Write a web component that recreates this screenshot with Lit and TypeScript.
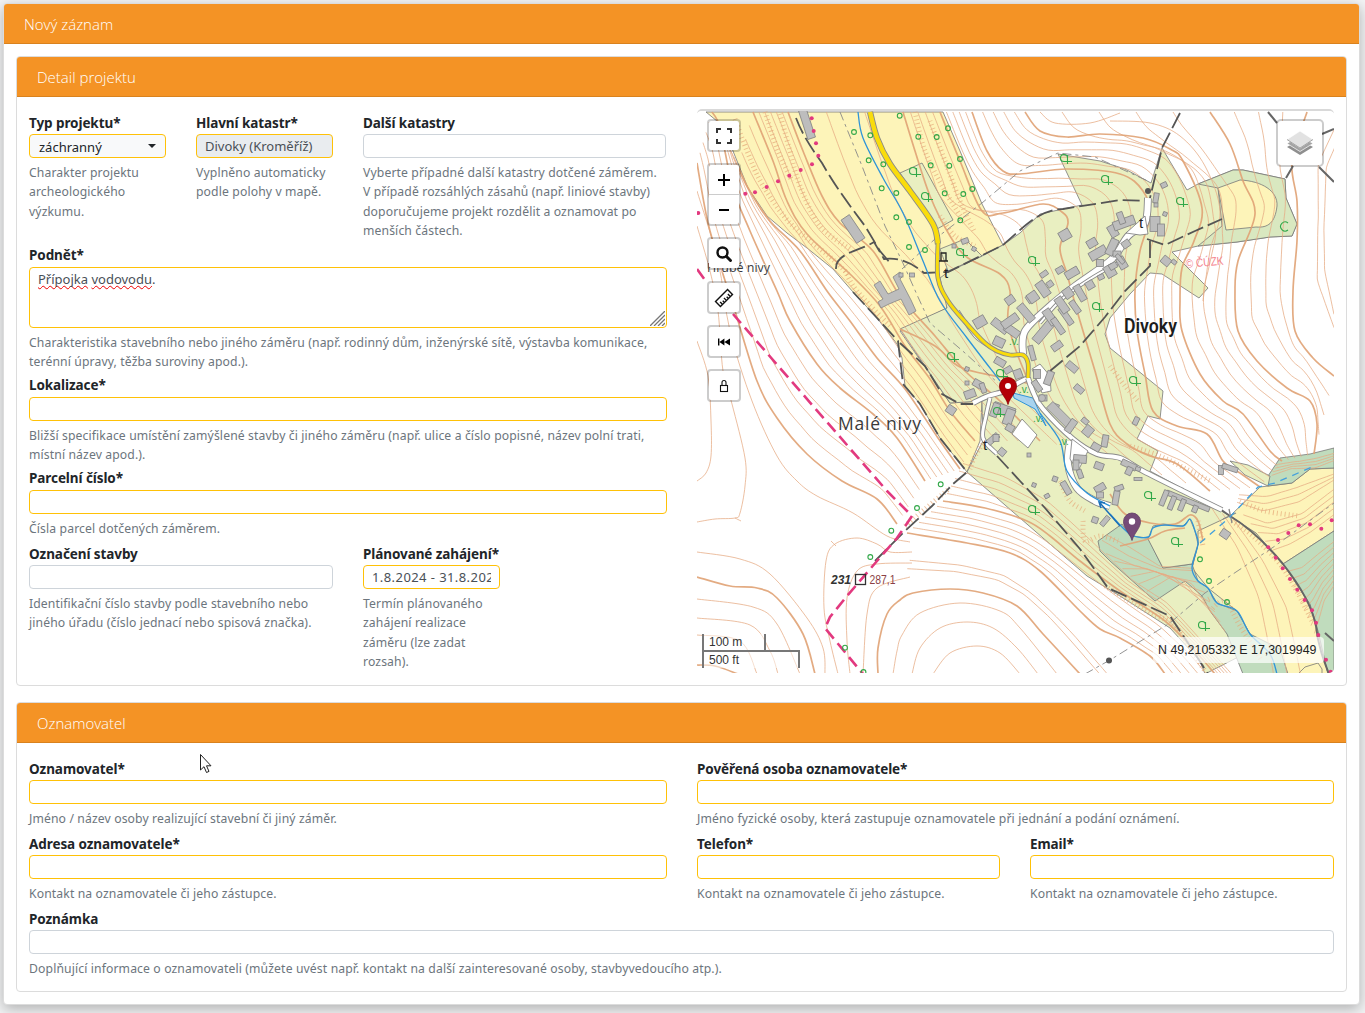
import { LitElement, html, svg, css, nothing } from "lit";
import { customElement, property } from "lit/decorators.js";

type Pt = [number, number];

const parse = (s: string): Pt[] =>
  s.trim().split(/\s+/).map((p) => p.split(",").map(Number) as Pt);

/** Resamples a polyline to n points spaced evenly along its length. */
function resample(pts: Pt[], n: number): Pt[] {
  const acc = [0];
  for (let i = 1; i < pts.length; i++) {
    acc.push(acc[i - 1] + Math.hypot(pts[i][0] - pts[i - 1][0], pts[i][1] - pts[i - 1][1]));
  }
  const total = acc[acc.length - 1];
  const out: Pt[] = [];
  let k = 1;
  for (let i = 0; i < n; i++) {
    const d = (total * i) / (n - 1);
    while (k < pts.length - 1 && acc[k] < d) k++;
    const t = (d - acc[k - 1]) / (acc[k] - acc[k - 1] || 1);
    out.push([
      pts[k - 1][0] + (pts[k][0] - pts[k - 1][0]) * t,
      pts[k - 1][1] + (pts[k][1] - pts[k - 1][1]) * t,
    ]);
  }
  return out;
}

/** Catmull-Rom spline through the points, as a path string. */
function smooth(p: Pt[]): string {
  let d = `M${p[0][0].toFixed(1)},${p[0][1].toFixed(1)}`;
  for (let i = 0; i < p.length - 1; i++) {
    const a = p[Math.max(0, i - 1)], b = p[i], c = p[i + 1], e = p[Math.min(p.length - 1, i + 2)];
    const v = [
      b[0] + (c[0] - a[0]) / 6, b[1] + (c[1] - a[1]) / 6,
      c[0] - (e[0] - b[0]) / 6, c[1] - (e[1] - b[1]) / 6, c[0], c[1],
    ].map((x) => x.toFixed(1));
    d += `C${v[0]},${v[1]} ${v[2]},${v[3]} ${v[4]},${v[5]}`;
  }
  return d;
}

const curve = (s: string) => smooth(parse(s));

/** Contours interpolated between two key contours. */
function between(a: string, b: string, n: number): string[] {
  const A = resample(parse(a), 26), B = resample(parse(b), 26);
  const out: string[] = [];
  for (let i = 1; i <= n; i++) {
    const t = i / (n + 1);
    out.push(smooth(A.map((p, j) => [p[0] + (B[j][0] - p[0]) * t, p[1] + (B[j][1] - p[1]) * t] as Pt)));
  }
  return out;
}

const W1 = "697,162 708,222 722,270 735,310 757,380 777,417 807,453 842,480 877,498 897,523";
const W2 = "712,111 720,127 733,187 750,230 777,290 790,320 817,363 840,387 873,413 897,437 925,480";
const W3 = "738,165 748,187 770,220 800,250 827,290 850,320 877,357 905,388 938,437 960,468";
const Y1 = "753,111 773,160 787,200 807,233 850,273 880,305 905,345 930,378 950,410 975,440";
const Y2 = "788,111 803,150 822,195 840,222 873,250 900,295 935,335 965,370 1000,400 1040,440";
const H_2 = "903,111 915,150 930,195 950,235 968,257 1000,273 1010,290 1008,320 1020,360 1045,410 1090,450";
const H_1 = "940,111 960,160 982,210 1003,212 1043,203 1062,211 1068,222 1060,247 1067,273 1080,320 1095,370 1110,423 1127,443 1150,455 1177,463 1210,490";
const H0 = "972,111 987,150 1003,170 1020,173 1067,168 1120,173 1143,190 1150,215 1140,250 1135,290 1137,330 1145,373 1153,410 1177,425 1207,433 1223,460 1240,472 1260,486";
const H1 = "1025,111 1040,130 1067,136 1100,133 1143,137 1170,148 1183,160 1202,207 1194,240 1182,267 1180,300 1182,330 1200,373 1223,400 1243,413 1270,450 1282,460";
const H2 = "1210,111 1230,143 1243,180 1255,213 1238,260 1235,290 1238,330 1257,360 1287,387 1310,400 1317,423 1314,453";
const H3 = "1307,111 1292,160 1297,200 1297,240 1293,290 1295,330 1313,357 1334,375";
const S1 = "943,500 985,507 1027,520 1050,535 1080,560 1120,590 1165,620 1195,650 1215,673";
const S2 = "907,532 967,542 1010,552 1040,570 1080,610 1100,628 1120,637 1150,655 1165,673";
const S3 = "878,673 878,647 887,613 900,599 913,592 950,588 983,592 1017,605 1043,633 1080,673";
const G1 = "967,455 1010,470 1050,495 1098,540 1135,577 1170,600 1205,640 1235,673";

const BOLD = [
  W1, W2, W3, Y1, Y2, H_2, H_1, H0, H1, H2, H3, S1, S2, S3,
  "697,576 730,585 757,587 777,597 803,633 815,673",
  "697,664 715,665 738,673",
  "900,328 935,345 960,366 1000,376 1040,385",
  "1110,493 1125,513 1150,522 1175,523 1190,514 1198,520 1203,540",
  "1120,545 1148,538 1165,530 1185,527",
].map(curve);

const THIN = [
  ...between(W1, W2, 4), ...between(W2, W3, 5), ...between(W3, Y1, 3), ...between(Y1, Y2, 5),
  ...between(Y2, H_2, 2), ...between(H_2, H_1, 4), ...between(H_1, H0, 4), ...between(H0, H1, 4),
  ...between(H1, H2, 4), ...between(H2, H3, 3), ...between(S1, G1, 5), ...between(S1, S2, 5),
  ...between(
    "912,551 967,558 1010,570 1040,592 1080,632 1115,673",
    "905,576 950,577 990,583 1017,595 1043,617 1092,673", 2),
  ...between("1200,500 1225,540 1245,590 1255,640 1260,673", "1245,525 1275,565 1300,610 1314,673", 3),
  ...between("1236,505 1262,517 1300,508 1334,482", "1280,558 1300,545 1334,520", 5),
  ...between("1240,490 1270,488 1300,478 1334,470", "1236,505 1262,517 1300,508 1334,482", 3),
  ...between("1283,563 1300,560 1334,535", "1318,640 1325,605 1334,590", 9),
  ...between("1270,478 1290,470 1315,470 1334,462", "1278,460 1300,458 1334,450", 4),
  ...between("1098,545 1125,562 1160,570 1195,572", "1155,598 1180,578 1200,585 1230,640", 6),
  ...between("1098,545 1125,562 1160,570 1195,572", "1110,528 1135,540 1160,563 1192,565", 2),
  ...between("1334,111 1310,160 1312,220 1310,290 1334,340", "1350,130 1334,170 1330,220 1334,300", 2),
  ...[
    "697,340 708,375 711,420 711,455 706,472 697,480",
    "697,225 710,270 718,310 723,370 732,403 745,457 745,485 740,512 735,517 715,518 697,521",
    "697,190 718,260 730,330 752,400 777,455 797,480 817,495 853,512 887,535 910,541",
    "697,551 740,558 770,573 807,617 823,647 825,673",
    "697,598 753,606 777,623 800,673",
    "697,617 750,624 770,650 778,673",
    "697,634 740,640 757,673",
    "838,673 830,640 824,607 826,560 835,543 857,537 877,543 890,551 912,551",
    "850,673 847,640 847,597 857,570 877,563 912,562",
    "863,673 867,613 877,587 910,576",
    "893,673 897,650 902,634 920,612 960,602 1000,610 1020,627 1057,673",
    "912,673 920,647 940,627 967,621 993,627 1017,647 1038,673",
    "933,673 950,652 977,645 1000,652 1020,673",
    "1040,111 1055,122 1090,122 1120,112",
    "1110,120 1150,122 1180,135 1205,165 1220,210 1210,250 1203,300",
    "735,517 741,520", "831,540 836,545",
  ].map(curve),
];

const HACHURES = [
  "735,118 747,150 762,183 790,222 830,256 850,275",
  "765,111 778,150 792,180", "780,113 790,150 800,185 820,225 850,248",
  "915,111 925,150 945,190 965,222", "930,120 945,160 960,200 975,232",
  "940,215 955,235 975,245", "985,440 975,455 970,468", "845,270 857,290 890,325",
  "1060,480 1070,500 1085,510", "1232,520 1255,537 1285,570 1312,620",
  "1110,365 1125,385 1138,400", "1130,445 1160,455 1190,470 1210,480",
  "1083,520 1085,540 1100,535 1118,540", "1240,500 1265,510 1300,515",
  "1198,520 1203,545", "1210,610 1225,600 1240,625 1262,660", "1205,600 1215,595",
  "1105,585 1150,612 1175,625 1205,670", "905,525 925,508 950,487",
].map(curve);

const YELLOW = [
  "706,111 943,111 960,150 982,203 1003,244 947,272 947,307 900,330 950,402 982,400 980,440 967,471 940,437 920,403 905,385 902,357 897,343 877,317 853,291 833,268 807,247 787,232 767,215 748,187 735,155 723,125",
  "1198,543 1195,520 1205,500 1230,515 1256,532 1283,563 1310,603 1318,630 1328,673 1277,673 1270,653 1250,633 1237,610 1217,602 1208,587 1198,580 1192,567",
  "1230,515 1260,486 1292,482 1310,468 1334,467 1334,530 1283,563 1256,532",
];
const GREEN = [
  "900,328 947,307 940,277 948,271 982,255 1003,244 1020,232 1040,213 1063,208 1082,204 1058,153 1100,160 1125,168 1151,182 1162,147 1187,189 1198,183 1233,169 1243,169 1285,178 1286,197 1297,223 1292,235 1270,236 1237,241 1198,245 1172,251 1208,287 1199,297 1162,273 1150,272 1130,293 1110,317 1105,333 1110,347 1163,390 1160,418 1148,415 1137,438 1158,450 1150,470 1187,490 1230,515 1198,530 1198,543 1192,567 1208,587 1237,610 1250,650 1205,673 1200,660 1170,627 1120,595 1087,575 1043,537 967,471 983,440 982,400 950,402",
];
const FOREST = [
  "1098,540 1122,523 1130,535 1148,537 1163,567 1192,563 1198,580 1208,587 1217,602 1237,610 1250,633 1280,648 1288,673 1243,673 1227,633 1210,610 1202,595 1185,580 1155,600 1110,560 1100,550",
  "1283,563 1334,530 1334,673 1328,673 1318,630 1310,603",
  "1268,475 1280,457 1310,453 1334,447 1334,467 1310,468 1292,482 1268,485",
];
const BUILDINGS: number[][] = [
  [807,123,8,30,-18],[853,228,10,28,-34],
  [1065,234,11,10,-30],[1072,272,8,14,60],[1060,269,8,6,-30],[1044,273,8,5,-35],[1050,283,6,6,-35],[1043,288,9,16,-35],[1031,297,9,8,-35],[1010,299,9,8,-35],
  [1092,242,10,8,-30],[1098,252,18,9,-30],[1112,246,8,17,25],[1113,230,8,12,-30],[1124,222,22,9,-20],[1121,217,6,12,-20],[1155,223,10,15,0],[1161,229,7,12,0],[1156,197,5,10,10],[1164,184,6,5,-25],[1156,204,4,4,0],[1165,213,4,4,20],
  [1080,292,7,17,-30],[1090,284,8,8,-30],[1101,276,6,5,-25],[1110,270,10,12,-30],[1122,262,8,12,-30],[1100,262,7,7,0],
  [1126,243,8,7,-35],[1117,253,8,6,0],[1113,265,8,6,-30],[1120,258,11,4,50],[1166,260,9,8,40],[1174,261,5,4,40],
  [980,321,12,10,-30],[1000,325,18,8,38],[1012,330,16,8,35],[999,341,11,9,25],[1010,320,18,8,-35],[1026,312,8,20,-40],[1033,296,10,10,-35],[1045,329,9,30,40],[1050,316,8,17,-35],[1058,325,6,18,-35],[1066,315,6,20,-35],[1062,304,8,17,-35],[1075,306,6,14,-35],[1068,292,9,10,-35],
  [1057,345,11,7,-35],[1072,366,12,7,40],[1079,388,10,6,40],[1088,430,9,10,40],[1085,420,7,5,40],[1105,440,6,12,10],[1096,446,9,7,30],[1056,405,6,4,20],[1000,361,11,7,30],[1008,369,8,6,-30],[1018,373,8,9,-20],[1032,352,5,15,-15],[1037,373,7,9,0],[1037,385,6,12,-35],[1049,377,7,14,20],[1043,397,8,6,0],
  [978,383,10,7,30],[983,387,5,10,-20],[970,393,11,8,-20],[951,409,9,8,35],[967,382,4,4,0],[967,368,4,4,20],[1004,409,22,10,20],[1009,416,9,16,20],[995,409,7,14,20],[1010,427,8,7,30],[993,438,6,13,50],[996,437,6,7,0],[1002,451,7,7,40],[1029,454,4,4,0],
  [1061,415,9,32,-45],[1071,425,7,14,35],[1080,458,13,8,5],[1076,464,6,10,0],[1099,465,9,7,20],[1080,473,5,9,-20],[1055,478,5,5,20],[1066,487,6,14,-30],[1100,487,11,7,-30],[1100,494,7,6,0],[1034,484,4,4,20],[1047,495,5,4,-30],[1095,519,6,6,20],[1105,520,11,5,-50],
  [1136,420,5,8,25],[1129,464,16,6,25],[1129,470,6,8,25],[1138,468,5,4,20],[1138,478,8,3,0],[1119,487,9,5,-20],[1116,497,6,14,10],
  [1188,500,46,5,22],[1164,497,5,16,22],[1172,502,5,14,22],[1182,504,5,12,22],[1195,508,5,7,22],[1225,533,9,8,35],
  [1221,469,5,9,0],[1230,467,16,5,18],[954,245,4,4,0],[965,240,7,5,-20],[974,248,4,4,30],[912,274,5,4,0],[901,274,4,4,0],
];
const COMPLEX = "874,284 880,280 888,293 899,288 893,276 900,271 903,275 900,278 911,299 916,310 909,314 901,298 889,303 881,307 878,301 883,298";
const DOTS = "811.7,117.3 813.7,130 816,142.3 818.3,154.7 812,163.3 800.7,169 789.3,174.7 778,180.3 766.7,186 755,191.3 745.3,192.7 698.3,212 1331.7,519.3 1321.3,527.7 1310,523.3 1298.7,524.3 1288.3,532 1278,539 1268.3,546.3 1275.7,556.7 1282.7,567.3 1290,578 1297.3,588.7 1304.7,599 1312,609.3 1316,621.7 1318.3,634 1326,658.7 1330.7,670.7";
const RINGS = "854,131 870.3,134.3 868.7,159.3 883.3,163.3 881.7,187.3 896.3,192 896.3,216.3 909,221 899.7,114.7 918.3,135.7 936.7,136 948,127.3 930.7,164.3 949.3,164.7 960,158 944.7,192.3 963.3,193 972.3,188 960.3,219.3 925,249 909,246 940.7,483.3 917,507 891.3,529.7 870.3,556 845,646.7 863.5,671 1200,558.3 1209,580 1227,601";
const TREES: number[][] = [[913,170],[925,195],[960,251],[1032,259],[1105,178],[1064,157],[1180,200],[951,355],[1000,372],[1096,305],[1133,379],[1032,508],[1148,494],[1175,540],[1202,624],[997,410]];
const LOW: number[][] = [[1014,341],[1024,389],[1038,418],[1064,441]];

@customElement("topo-map")
export class TopoMap extends LitElement {
  static styles = css`
    :host { display: block; }
    .map { display: block; width: 637px; height: 564px; border-radius: 0 0 4px 4px; }
    .thin { fill: none; stroke: #e6ab83; stroke-width: 0.9; opacity: 0.85; }
    .bold { fill: none; stroke: #e0a274; stroke-width: 1.7; opacity: 0.9; }
    .hach { fill: none; stroke: #e5a878; stroke-width: 5; stroke-dasharray: 0.9 3; opacity: 0.75; }
    .area { stroke: #777; stroke-width: 0.8; }
    .yellow { fill: #fdf4b9; }
    .green { fill: #e9efc1; }
    .sage { fill: #d9e8c0; }
    .forest { fill: #c0dcbd; }
    .white { fill: #fff; }
    .casing { fill: none; stroke: #8a8a8a; stroke-linejoin: round; }
    .road { fill: none; stroke: #fff; stroke-linejoin: round; }
    .main { stroke: #f9dc0c; }
    .water { fill: none; stroke: #2f94d8; stroke-width: 1.3; }
    .arrow { stroke: #1c6fb8; fill: none; stroke-width: 1.5; }
    .pond { fill: #a9d3ee; stroke: #2f94d8; stroke-width: 1; }
    .dash { fill: none; stroke: #555; stroke-width: 1.8; stroke-dasharray: 17 5; }
    .rail { fill: none; stroke: #666; stroke-width: 2; }
    .path { fill: none; stroke: #888; stroke-width: 0.9; stroke-dasharray: 9 4 3 4; }
    .border { fill: none; stroke: #e2397f; stroke-width: 2.6; stroke-dasharray: 12 6; }
    .dot { fill: #e2397f; }
    .house { fill: #bdbdbd; stroke: #858585; stroke-width: 0.8; }
    .ring { fill: none; stroke: #31a848; stroke-width: 1.1; }
    .low { font: 10px "Liberation Sans", sans-serif; fill: #31a848; }
    .drain { fill: none; stroke: #43a0dd; stroke-width: 1.3; stroke-dasharray: 7 6; }
    .name { font-family: "Open Sans", sans-serif; fill: #3a3a3a; paint-order: stroke; stroke: #fff; stroke-width: 1px; }
    .town { font: 600 20px Roboto, sans-serif; fill: #1c1c1c; stroke: #fff; stroke-width: 1.5px; paint-order: stroke; }
    .num { font: italic bold 12px "Liberation Sans", sans-serif; fill: #333; }
    .elev { font: 12px "Liberation Sans", sans-serif; fill: #8b3f45; }
    .copy { font: 12px "Liberation Sans", sans-serif; fill: #f4848f; }
    .sym { font: 15px "Liberation Sans", sans-serif; fill: #222; }
  `;

  render() {
    const area = (list: string[], cls: string) =>
      list.map((p) => svg`<polygon class="area ${cls}" points=${p}></polygon>`);
    const road = (pts: string, w: number, cls = "") => svg`
      <path class="casing" stroke-width=${w + 1.8} d=${curve(pts)}></path>
      <path class="road ${cls}" stroke-width=${w} d=${curve(pts)}></path>`;
    return html`<svg class="map" viewBox="697 110 637 564">
      <rect class="white" x="697" y="110" width="637" height="564"></rect>
      ${area(YELLOW, "yellow")} ${area(GREEN, "green")} ${area(FOREST, "forest")}
      <polygon class="area green" points="900,172 922,162 953,219 937,228"></polygon>
      <polygon class="area green" points="940,248 965,238 982,255 948,270"></polygon>
      <polygon class="area green" points="1148,538 1153,525 1163,523 1183,525 1190,518 1195,530 1198,543 1192,563 1163,567"></polygon>
      <polygon class="area sage" points="1198,183 1233,169 1243,169 1285,178 1286,197 1297,223 1292,235 1270,236 1237,241 1198,245 1222,225 1218,187"></polygon>
      <path class="area yellow" d="M1218,187 L1240,179 C1262,180 1278,190 1277,205 C1275,222 1268,227 1256,226 L1226,229 Z"></path>
      <polygon class="area yellow" points="1298,673 1305,666 1318,662 1322,668 1322,673"></polygon>
      <polygon class="area green" points="1230,460 1248,464 1270,475 1268,485 1245,474"></polygon>
      ${THIN.map((d) => svg`<path class="thin" d=${d}></path>`)}
      ${BOLD.map((d) => svg`<path class="bold" d=${d}></path>`)}
      ${HACHURES.map((d) => svg`<path class="hach" d=${d}></path>`)}

      <path class="path" d="M840,111 L862,165 L885,225 L902,260 L918,296 L930,322 L965,352 L998,382"></path>
      <path class="path" d="M902,268 L935,238 L982,202 L1020,170 L1058,152 L1095,156 L1148,180"></path>
      <path class="path" d="M1085,673 L1110,659 L1170,622 L1205,592 L1230,575 L1275,545 L1334,502"></path>
      <path class="dash" d="M796,117 C803,135 812,148 822,162 C835,185 850,205 865,225 L880,250 L890,262"></path>
      <path class="dash" d="M836,268 C835,252 860,250 874,241 L884,258 C900,256 912,262 924,272 L948,271 L1003,244 C1025,225 1040,208 1063,208 L1120,199 L1148,200"></path>
      <path class="dash" d="M1180,112 L1162,147 L1150,197 L1147,215"></path>
      <path class="dash" d="M1147,238 L1165,244 L1195,230 L1222,218"></path>
      <path class="dash" d="M1150,240 L1150,265 L1125,290 L1105,316 L1080,345 L1050,370"></path>
      <path class="dash" d="M853,291 L877,317 L898,340 L903,383 L920,403 L940,437 L967,471 L953,483 L932,505 L905,530 L875,560"></path>
      <path class="dash" d="M900,342 L925,365 L942,393 L960,403 L973,403"></path>
      <path class="dash" d="M997,455 L1020,480 L1045,507 L1080,548 L1108,587 L1170,615 L1190,645 L1208,673"></path>
      <path class="rail" d="M1268,111 L1277,122 M1286,177 L1293,165 M1322,133 L1334,128 M1319,166 L1334,181"></path>
      <path class="rail" d="M1220,508 L1230,515 C1250,527 1268,545 1283,563 C1298,582 1312,605 1316,625 C1318,645 1324,660 1329,673 M1325,632 L1334,640"></path>
      <path class="casing" stroke-width="1.3" d="M1223,518 L1236,512 M1229,508 L1232,522"></path>

      <path class="water" d=${curve("858,111 863,137 883,177 903,212 923,260 940,300 967,337 1000,380")}></path>
      <path class="pond" d="M1013,392 L1033,397 L1046,425 L1035,408 L1014,397 Z"></path>
      ${road("973,402 988,395 1005,390 1018,382 1028,377", 4)}
      ${road("990,397 986,415 983,437 997,453", 3)}
      ${road("1028,377 1034,393 1043,408 1073,438 1097,453 1120,457 1143,470 1183,490 1222,509", 4)}
      ${road("1070,440 1068,463 1077,487 1095,500 1110,505", 6)}
      ${road("1023,353 1025,330 1050,305 1075,285 1112,258 1128,235 1145,222 1148,197", 6)}
      ${road("1040,322 1062,298 1090,278 1118,262", 2)}
      ${road("958,310 975,335 992,347", 2)}
      <polygon class="area white" points="1022,418 1037,434 1028,447 1012,433"></polygon>
      <polygon class="area white" points="1032,368 1040,363 1050,375 1051,390 1042,392"></polygon>
      <polygon class="area white" points="1072,438 1088,450 1078,470 1070,458"></polygon>
      <polygon class="area white" points="1126,232 1145,215 1148,233 1140,234"></polygon>
      ${road("870,111 877,137 890,163 910,190 933,223 938,243", 4.5, "main")}
      ${road("938,242 938,277 948,300 967,323 985,342 997,350 1010,354 1023,354 1028,362 1028,377", 3, "main")}
      <path class="water" d=${curve("1040,412 1060,440 1067,470 1087,492 1110,505")}></path>
      <path class="water" d=${curve("1110,513 1130,533 1148,536 1153,527 1165,524 1183,525 1190,518 1195,530 1198,543 1192,567 1198,580 1208,587 1217,602 1237,610 1250,633 1270,653 1277,673")}></path>
      <path class="arrow" d="M1120,525 L1100,502 M1105,502 L1099,501 L1101,507"></path>
      <path class="drain" d="M1200,542 L1230,516 L1258,486 L1275,482 L1312,466"></path>

      <polygon class="house" points=${COMPLEX}></polygon>
      ${BUILDINGS.map(([x, y, w, h, a]) => svg`<rect class="house" x=${x - w / 2} y=${y - h / 2} width=${w} height=${h} transform="rotate(${a} ${x} ${y})"></rect>`)}
      <circle cx="1148" cy="190" r="3" fill="#555"></circle>
      <circle cx="1109" cy="659.5" r="3" fill="#555"></circle>
      <circle class="house" cx="1042" cy="397" r="3.5"></circle>

      <path class="border" d="M697,268 L705,279 M733,313 L887,490 L912,515 L897,537 L877,560 L847,595 L830,616 L825,627 L863,673"></path>
      ${parse(DOTS).map(([x, y]) => svg`<circle class="dot" cx=${x} cy=${y} r="2"></circle>`)}
      ${parse(RINGS).map(([x, y]) => svg`<circle class="ring" cx=${x} cy=${y} r="2.4"></circle>`)}
      ${TREES.map(([x, y]) => svg`<path class="ring" d="M${x + 3.5},${y} a3.5,3.5 0 1 0 -3.5,3.5 h8 M${x + 3.5},${y - 3} v9"></path>`)}
      ${LOW.map(([x, y]) => svg`<text class="low" text-anchor="middle" x=${x} y=${y + 3}>.v.</text>`)}
      <path class="ring" d="M1288,222 a4.500,4.500 0 1 0 0,7"></path>

      <text class="name" font-size="12.500" x="707" y="271" textLength="63">Hrubé nivy</text>
      <text class="name" font-size="17.500" x="838" y="428.500" textLength="83">Malé nivy</text>
      <text class="town" x="1124" y="332" textLength="53" lengthAdjust="spacingAndGlyphs">Divoky</text>
      <text class="num" x="831" y="583">231</text>
      <rect x="855.500" y="573.500" width="10" height="10" fill="none" stroke="#333" stroke-width="1.3"></rect>
      <text class="elev" x="869.500" y="583" textLength="26" lengthAdjust="spacingAndGlyphs">287,1</text>
      <text class="copy" x="1186" y="267" textLength="38" lengthAdjust="spacingAndGlyphs" transform="rotate(-5 1186 267)">© ČÚZK</text>
      <text class="sym" x="944" y="277">t</text>
      <text class="sym" x="1139" y="227">t</text>
      <text class="sym" x="983" y="449">t</text>
      <path d="M941,260 v-8 h5 v8 M939,260 h9" fill="none" stroke="#222" stroke-width="1.3"></path>

      <path d="M1008,403.500 C1006,396 999.500,392 999.500,385 a8.500,8.500 0 0 1 17,0 C1016.500,392 1010,396 1008,403.500 Z" fill="#b30007" stroke="#8d0005" stroke-width="0.8"></path>
      <circle cx="1008" cy="385" r="3" fill="#fff"></circle>
      <path d="M1132,539.500 C1130,532 1123.500,527.500 1123.500,520.500 a8.500,8.500 0 0 1 17,0 C1140.500,527.500 1134,532 1132,539.500 Z" fill="#754b78" stroke="#5f3b63" stroke-width="0.8"></path>
      <circle cx="1132" cy="520.500" r="3.200" fill="#fff"></circle>
    </svg>`;
  }
}

@customElement("map-panel")
export class MapPanel extends LitElement {
  static styles = css`
    :host { display: block; }
    .frame { position: relative; width: 637px; height: 564px; margin-top: 12px; border-top: 2px solid #d9d9d9; border-radius: 5px; overflow: hidden; box-sizing: border-box; }
    .tools { position: absolute; left: 10px; top: 8px; display: flex; flex-direction: column; gap: 11px; }
    .btn, .layers { box-sizing: border-box; width: 34px; height: 33px; background: #fff; background-clip: padding-box; border: 2px solid rgba(0, 0, 0, 0.2); border-radius: 4px; display: flex; align-items: center; justify-content: center; }
    .zoom { height: 63px; flex-direction: column; }
    .half { flex: 1; width: 100%; display: flex; align-items: center; justify-content: center; }
    .half + .half { border-top: 1px solid #ccc; }
    .layers { position: absolute; left: 579px; top: 8px; width: 48px; height: 48px; border-radius: 5px; }
    .scale { position: absolute; left: 5px; bottom: 5px; font: 12px/16px "Liberation Sans", sans-serif; color: #333; }
    .metric, .imperial { box-sizing: border-box; border: 2px solid #777; padding-left: 5px; height: 18px; background: rgba(255, 255, 255, 0.5); }
    .metric { width: 64px; border-top: none; border-bottom: none; height: 16px; }
    .imperial { width: 98px; border-bottom: none; }
    .coords { position: absolute; right: 10px; bottom: 10px; height: 26px; width: 171px; box-sizing: border-box; padding-left: 5px; background: rgba(255, 255, 255, 0.7); border-radius: 4px; font: 12.4px/26px "Liberation Sans", sans-serif; color: #222; white-space: nowrap; }
  `;

  render() {
    return html`<div class="frame">
      <topo-map></topo-map>
      <div class="tools">
        <div class="btn"><svg width="18" height="18" fill="none" stroke="#333" stroke-width="2"><path d="M2,6 V2 H6 M12,2 H16 V6 M16,12 V16 H12 M6,16 H2 V12"></path></svg></div>
        <div class="btn zoom">
          <div class="half"><svg width="14" height="14" stroke="#000" stroke-width="2"><path d="M1,7 H13 M7,1 V13"></path></svg></div>
          <div class="half"><svg width="14" height="14" stroke="#000" stroke-width="2"><path d="M2,7 H12"></path></svg></div>
        </div>
        <div class="btn"><svg width="18" height="18" fill="none" stroke="#111"><circle cx="7.500" cy="7.500" r="5" stroke-width="2.400"></circle><path d="M11.500,11.500 L15.500,15.500" stroke-width="3" stroke-linecap="round"></path></svg></div>
        <div class="btn"><svg width="20" height="20" fill="none" stroke="#111" stroke-width="1.400"><g transform="rotate(-45 10 10)"><rect x="1.500" y="6.500" width="17" height="7"></rect><path d="M4.500,13 v-3 M7.200,13 v-2 M10,13 v-3 M12.800,13 v-2 M15.500,13 v-3"></path></g></svg></div>
        <div class="btn"><svg width="14" height="10" fill="#000"><path d="M1,1.500 H2.400 V8.500 H1 Z M7.400,1.500 V8.500 L2.400,5 Z M13,1.500 V8.500 L7.400,5 Z"></path></svg></div>
        <div class="btn"><svg width="12" height="14" fill="none" stroke="#111" stroke-width="1.100"><rect x="2.500" y="6.500" width="7" height="6"></rect><path d="M4,6.500 V3.500 a2,2 0 0 1 4,0 V6.500"></path></svg></div>
      </div>
      <div class="layers"><svg width="28" height="26">
        <path d="M1,17 L14,9.500 L27,17 L14,25 Z" fill="#8f8f8f"></path>
        <path d="M1,13.500 L14,5.500 L27,13.500 L14,21.500 Z" fill="#a3a3a3" stroke="#fff" stroke-width="0.700"></path>
        <path d="M1,9.500 L14,1 L27,9.500 L14,18 Z" fill="#e2e2e2" stroke="#fff" stroke-width="0.700"></path>
        <path d="M1,9.500 L14,18 L27,9.500" fill="none" stroke="#999" stroke-width="0.900"></path>
      </svg></div>
      <div class="scale"><div class="metric">100 m</div><div class="imperial">500 ft</div></div>
      <div class="coords">N 49,2105332 E 17,3019949</div>
    </div>`;
  }
}

@customElement("form-field")
export class FormField extends LitElement {
  @property() label = "";
  @property() value = "";
  @property() kind = "text";
  @property({ type: Array }) help: string[] = [];

  static styles = css`
    :host { display: block; min-width: 0; margin-top: 4px; margin-bottom: 1.4px; }
    .label { display: block; height: 21.6px; font: 700 13.5px/21.6px "Noto Sans", "Open Sans", sans-serif; color: #212529; white-space: nowrap; letter-spacing: -0.08px; }
    .control { display: block; box-sizing: border-box; width: 100%; height: 24px; border: 1px solid #ced4da; border-radius: 4px; padding: 1px 8px; margin: 0; background: #fff; color: #495057; font: 13px/20px "Noto Sans", "Open Sans", sans-serif; outline: none; overflow: hidden; }
    .required { border-color: #ffc107; }
    .locked { background: #e9ecef; }
    .dates { letter-spacing: 0.42px; }
    .select { display: flex; align-items: center; justify-content: space-between; background: #f8f9fa; color: #212529; padding: 2px 9px 0; }
    .caret { border: 4px solid transparent; border-top-color: #212529; border-bottom: none; margin-top: -2px; }
    .area { position: relative; height: 61px; }
    .misspelt { text-decoration: underline wavy #e00 1px; text-underline-offset: 1px; text-decoration-skip-ink: none; }
    .grip { position: absolute; right: 1px; bottom: 1px; }
    .help { margin-top: 5px; font: 12.2px/19.2px "Noto Sans", "Open Sans", sans-serif; color: #6c757d; letter-spacing: 0.12px; }
    .line { white-space: nowrap; }
  `;

  private control() {
    const req = this.label.endsWith("*") ? "required" : "";
    if (this.kind === "select") {
      return html`<div class="control select ${req}"><span>${this.value}</span><span class="caret"></span></div>`;
    }
    if (this.kind === "textarea") {
      return html`<div class="control area ${req}"><span class="misspelt">Přípojka</span> <span class="misspelt">vodovodu</span>.
        <svg class="grip" width="15" height="15" stroke="#777" stroke-width="1.300"><path d="M0,15 L15,0 M4,15 L15,4 M8,15 L15,8 M12,15 L15,12"></path></svg></div>`;
    }
    return html`<input class="control ${req} ${this.kind}" .value=${this.value} ?readonly=${this.kind === "locked"} />`;
  }

  render() {
    return html`<label class="label">${this.label}</label>${this.control()}
      ${this.help.length ? html`<div class="help">${this.help.map((l) => html`<div class="line">${l}</div>`)}</div>` : nothing}`;
  }
}

@customElement("app-root")
export class AppRoot extends LitElement {
  static styles = css`
    :host { display: block; box-sizing: border-box; position: relative; width: 1365px; height: 1013px; padding: 3px 5px 0 3px; background: #f3f4f5; overflow: hidden; }
    .card { box-sizing: border-box; background: #fff; border: 1px solid #dcdcdc; border-radius: 4px; }
    .outer { width: 1357px; height: 1002px; box-shadow: 0 4px 14px rgba(0, 0, 0, 0.28); }
    .head { box-sizing: border-box; height: 40px; background: #f49325; border-bottom: 1px solid #d9821e; border-radius: 3px 3px 0 0; color: #fff; padding: 1px 0 0 20px; font: 300 15px/39px "Open Sans", "Noto Sans", sans-serif; }
    .stack { padding: 12px; display: flex; flex-direction: column; gap: 16px; }
    .project { height: 630px; }
    .notifier { height: 290px; }
    .body { display: grid; grid-template-columns: 638px 637px; column-gap: 30px; padding: 11.5px 12px 0; }
    .project .body { padding-top: 0; }
    .left { padding-top: 11.6px; }
    .r3 { display: grid; grid-template-columns: 137px 137px 303px; column-gap: 30px; }
    .r2 { display: grid; grid-template-columns: 304px 137px; column-gap: 30px; }
    .half { display: grid; grid-template-columns: 303px 304px; column-gap: 30px; }
    .wide { grid-column: 1 / -1; }
    .cursor { position: absolute; left: 199px; top: 753px; }
  `;

  render() {
    const contact = ["Kontakt na oznamovatele či jeho zástupce."];
    return html`
      <div class="card outer">
        <div class="head">Nový záznam</div>
        <div class="stack">
          <section class="card project">
            <div class="head">Detail projektu</div>
            <div class="body">
              <div class="left">
                <div class="r3">
                  <form-field label="Typ projektu*" kind="select" value="záchranný" .help=${["Charakter projektu", "archeologického", "výzkumu."]}></form-field>
                  <form-field label="Hlavní katastr*" kind="locked" value="Divoky (Kroměříž)" .help=${["Vyplněno automaticky", "podle polohy v mapě."]}></form-field>
                  <form-field label="Další katastry" .help=${["Vyberte případné další katastry dotčené záměrem.", "V případě rozsáhlých zásahů (např. liniové stavby)", "doporučujeme projekt rozdělit a oznamovat po", "menších částech."]}></form-field>
                </div>
                <form-field label="Podnět*" kind="textarea" .help=${["Charakteristika stavebního nebo jiného záměru (např. rodinný dům, inženýrské sítě, výstavba komunikace,", "terénní úpravy, těžba suroviny apod.)."]}></form-field>
                <form-field label="Lokalizace*" .help=${["Bližší specifikace umístění zamýšlené stavby či jiného záměru (např. ulice a číslo popisné, název polní trati,", "místní název apod.)."]}></form-field>
                <form-field label="Parcelní číslo*" .help=${["Čísla parcel dotčených záměrem."]}></form-field>
                <div class="r2">
                  <form-field label="Označení stavby" .help=${["Identifikační číslo stavby podle stavebního nebo", "jiného úřadu (číslo jednací nebo spisová značka)."]}></form-field>
                  <form-field label="Plánované zahájení*" kind="dates" value="1.8.2024 - 31.8.2024" .help=${["Termín plánovaného", "zahájení realizace", "záměru (lze zadat", "rozsah)."]}></form-field>
                </div>
              </div>
              <map-panel></map-panel>
            </div>
          </section>
          <section class="card notifier">
            <div class="head">Oznamovatel</div>
            <div class="body">
              <form-field label="Oznamovatel*" .help=${["Jméno / název osoby realizující stavební či jiný záměr."]}></form-field>
              <form-field label="Pověřená osoba oznamovatele*" .help=${["Jméno fyzické osoby, která zastupuje oznamovatele při jednání a podání oznámení."]}></form-field>
              <form-field label="Adresa oznamovatele*" .help=${contact}></form-field>
              <div class="half">
                <form-field label="Telefon*" .help=${contact}></form-field>
                <form-field label="Email*" .help=${contact}></form-field>
              </div>
              <form-field class="wide" label="Poznámka" .help=${["Doplňující informace o oznamovateli (můžete uvést např. kontakt na další zainteresované osoby, stavbyvedoucího atp.)."]}></form-field>
            </div>
          </section>
        </div>
      </div>
      <svg class="cursor" width="14" height="22"><path d="M1.500,1.500 V17 L5,13.700 L7.500,19.500 L10,18.400 L7.500,12.800 H12 Z" fill="#fff" stroke="#222" stroke-width="1"></path></svg>
    `;
  }
}
